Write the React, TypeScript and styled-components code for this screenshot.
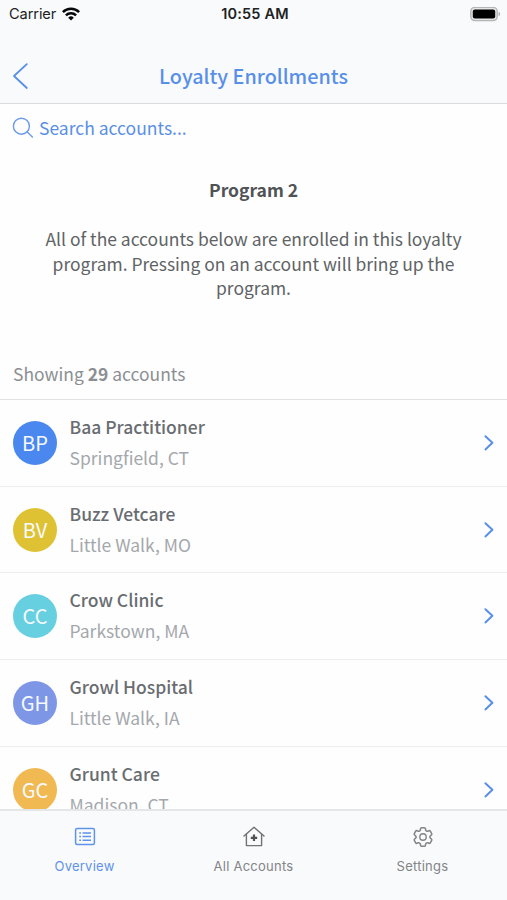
import React from "react";
import styled, { createGlobalStyle } from "styled-components";

const Global = createGlobalStyle`
  * { box-sizing: border-box; }
  html, body { margin: 0; padding: 0; background: #fff; overflow: hidden; }
`;

const Screen = styled.div`
  width: 507px;
  height: 900px;
  display: flex;
  flex-direction: column;
  overflow: hidden;
  background: #fefefe;
  font-family: "Noto Sans CJK SC", "Noto Sans", sans-serif;
`;

const StatusBar = styled.div`
  height: 28px;
  flex: none;
  display: grid;
  grid-template-columns: 1fr auto 1fr;
  align-items: center;
  padding: 0 6px 0 9px;
  font: 400 15px/28px Inter, sans-serif;
  color: #222;
  background: #f9fafc;
`;

const Carrier = styled.div`
  display: flex;
  align-items: center;
  gap: 6px;
  font-size: 14.6px;
  letter-spacing: -0.1px;
`;

const Clock = styled.div`
  font-weight: 600;
  font-size: 14.5px;
  letter-spacing: 0.2px;
`;

const Battery = styled.div`
  display: flex;
  justify-content: flex-end;
`;

const Header = styled.header`
  height: 76px;
  flex: none;
  display: grid;
  grid-template-columns: 60px 1fr 60px;
  align-items: center;
  padding-top: 23px;
  padding-bottom: 3px;
  background: #f9fafc;
  border-bottom: 1px solid #d9dbdd;
`;

const BackButton = styled.div`
  display: flex;
  padding-left: 12px;
`;

const Title = styled.h1`
  margin: 0;
  text-align: center;
  color: #588fe8;
  font-size: 19.8px;
  line-height: 28px;
  font-weight: 500;
`;

const SearchBar = styled.div`
  height: 48px;
  flex: none;
  display: flex;
  align-items: center;
  gap: 5px;
  padding-left: 12px;
  color: #5a8fe6;
  font-size: 17.5px;
  line-height: 24px;
`;

const Intro = styled.section`
  height: 210px;
  flex: none;
  padding: 26px 40px 0;
  text-align: center;
  color: #606365;
`;

const ProgramName = styled.h2`
  margin: 0 0 25px;
  font-size: 17.5px;
  line-height: 24px;
  font-weight: 700;
  color: #505355;
`;

const Description = styled.p`
  margin: 0;
  font-size: 17.47px;
  line-height: 24.5px;
`;

const Count = styled.div`
  height: 38px;
  flex: none;
  padding-left: 13px;
  font-size: 17.45px;
  line-height: 24px;
  color: #8c8f92;
  border-bottom: 1px solid #dfe1e2;
`;

const List = styled.div`
  flex: 1;
  min-height: 0;
  overflow: hidden;
`;

const Row = styled.div`
  height: 86.7px;
  display: grid;
  grid-template-columns: 44px 1fr auto;
  column-gap: 12.5px;
  align-items: center;
  padding: 0 12px 0 13px;
  border-bottom: 1px solid #ebedee;
`;

const Avatar = styled.div<{ $color: string }>`
  width: 44px;
  height: 44px;
  border-radius: 50%;
  background: ${(p) => p.$color};
  color: #f6faff;
  font-size: 20px;
  line-height: 44px;
  text-align: center;
`;

const Details = styled.div`
  padding-bottom: 2px;
  font-size: 17.5px;
  line-height: 31px;
`;

const Name = styled.div`
  color: #696d71;
  font-weight: 500;
`;

const Place = styled.div`
  color: #a4a8ac;
`;

const TabBar = styled.nav`
  height: 91px;
  flex: none;
  display: grid;
  grid-template-columns: repeat(3, 1fr);
  background: #f9fafc;
  border-top: 2px solid #e4e6e7;
`;

const Tab = styled.div<{ $active?: boolean }>`
  display: flex;
  flex-direction: column;
  align-items: center;
  gap: 8px;
  padding-top: 15px;
  color: ${(p) => (p.$active ? "#5f93ea" : "#828486")};
  font: 400 13px/20px Inter, sans-serif;
  letter-spacing: 0.25px;
`;

const accounts = [
  { initials: "BP", color: "#4a87ef", name: "Baa Practitioner", place: "Springfield, CT" },
  { initials: "BV", color: "#dfc233", name: "Buzz Vetcare", place: "Little Walk, MO" },
  { initials: "CC", color: "#66cfe0", name: "Crow Clinic", place: "Parkstown, MA" },
  { initials: "GH", color: "#7d97e6", name: "Growl Hospital", place: "Little Walk, IA" },
  { initials: "GC", color: "#f1b952", name: "Grunt Care", place: "Madison, CT" },
];

const WifiIcon = () => (
  <svg width="18" height="14" viewBox="0 0 18 14" fill="none" stroke="#080808" strokeWidth="2.5">
    <path d="M.9 5.1a11.4 11.4 0 0 1 16.2 0" />
    <path d="M3.9 8.3a7.2 7.2 0 0 1 10.2 0" />
    <path d="M9 13.6 6.2 10.7a4 4 0 0 1 5.6 0Z" fill="#080808" stroke="none" />
  </svg>
);

const BatteryIcon = () => (
  <svg width="31" height="15" viewBox="0 0 31 15">
    <rect x=".8" y=".4" width="26.4" height="13.2" rx="4" fill="#e4e5e6" stroke="#b4b5b7" strokeWidth="1.4" />
    <rect x="2.8" y="2.4" width="22.4" height="9.2" rx="2" fill="#000" />
    <path d="M28.6 4.8c2 .8 2 3.6 0 4.4Z" fill="#a8a9ab" />
  </svg>
);

const BackIcon = () => (
  <svg width="18" height="28" viewBox="0 0 18 28" fill="none" stroke="#588fe8" strokeWidth="1.8" strokeLinecap="round" strokeLinejoin="round">
    <path d="M14.8 2.2 2 14l12.8 12" />
  </svg>
);

const SearchIcon = () => (
  <svg width="22" height="22" viewBox="0 0 22 22" fill="none" stroke="#6b9bea" strokeWidth="1.4" strokeLinecap="round">
    <circle cx="9.4" cy="9.2" r="8" />
    <path d="m15 14.8 5.4 5.2" />
  </svg>
);

const ChevronIcon = () => (
  <svg width="12" height="18" viewBox="0 0 12 18" fill="none" stroke="#588fe8" strokeWidth="2" strokeLinecap="round" strokeLinejoin="round">
    <path d="m2.4 2.2 7 6.600-7 6.600" />
  </svg>
);

const ListIcon = () => (
  <svg width="24" height="22" viewBox="0 0 24 22" fill="none" stroke="currentColor" strokeWidth="1.5">
    <rect x="2.6" y="2.4" width="18.800" height="16.200" rx="1.500" />
    <path d="M9.500 7h8.500M9.500 10.600h8.500M9.500 14.200h8.500M6.200 7h1.800M6.200 10.600h1.800M6.200 14.200h1.800" />
  </svg>
);

const HomeIcon = () => (
  <svg width="24" height="22" viewBox="0 0 24 22" fill="none" stroke="#707274" strokeWidth="1.4" strokeLinejoin="round" strokeLinecap="round">
    <path d="M2 10 12 1.300l10 8.700" />
    <path d="M4.400 8.200v11.400h15.200v-11.400" />
    <path d="M12 8.600v6.400M8.800 11.800h6.400" stroke="#505254" strokeWidth="2.200" strokeLinecap="butt" />
  </svg>
);

const GearIcon = () => (
  <svg width="24" height="22" viewBox="0 0 24 24" fill="none" stroke="currentColor" strokeWidth="1.5" strokeLinejoin="round">
    <path d="M9.600 3.940c.09-.54.56-.94 1.110-.94h2.580c.55 0 1.020.4 1.110.94l.21 1.280c.06.37.31.68.65.87l.22.13c.32.2.72.26 1.070.12l1.220-.45a1.130 1.130 0 0 1 1.370.49l1.300 2.250a1.130 1.130 0 0 1-.26 1.430l-1 .82c-.3.24-.44.61-.43.99v.26c-.01.38.13.75.43.99l1 .83c.43.35.54.95.26 1.430l-1.300 2.250a1.130 1.130 0 0 1-1.370.49l-1.220-.46c-.35-.13-.75-.07-1.070.13l-.22.13c-.34.18-.59.49-.65.86l-.21 1.290c-.09.54-.56.94-1.110.94h-2.600c-.55 0-1.010-.4-1.100-.94l-.22-1.290c-.06-.37-.3-.68-.64-.86l-.22-.13c-.32-.2-.72-.26-1.080-.13l-1.210.46a1.130 1.130 0 0 1-1.370-.49l-1.300-2.250a1.130 1.130 0 0 1 .26-1.430l1-.83c.3-.24.44-.61.43-.99v-.26c.01-.38-.13-.75-.43-.99l-1-.82a1.130 1.130 0 0 1-.26-1.430l1.300-2.250a1.130 1.130 0 0 1 1.370-.49l1.220.45c.35.14.75.08 1.070-.12l.22-.13c.34-.19.58-.5.64-.87Z" transform="translate(-1.440 -1.440) scale(1.120)" />
    <circle cx="12" cy="12" r="3.500" />
  </svg>
);

export default function App() {
  return (
    <Screen>
      <Global />
      <StatusBar>
        <Carrier>
          <span>Carrier</span>
          <WifiIcon />
        </Carrier>
        <Clock>10:55 AM</Clock>
        <Battery>
          <BatteryIcon />
        </Battery>
      </StatusBar>
      <Header>
        <BackButton>
          <BackIcon />
        </BackButton>
        <Title>Loyalty Enrollments</Title>
      </Header>
      <SearchBar>
        <SearchIcon />
        <span>Search accounts...</span>
      </SearchBar>
      <Intro>
        <ProgramName>Program 2</ProgramName>
        <Description>
          All of the accounts below are enrolled in this loyalty program. Pressing on an account will bring up the program.
        </Description>
      </Intro>
      <Count>
        Showing <b>29</b> accounts
      </Count>
      <List>
        {accounts.map((a) => (
          <Row key={a.name}>
            <Avatar $color={a.color}>{a.initials}</Avatar>
            <Details>
              <Name>{a.name}</Name>
              <Place>{a.place}</Place>
            </Details>
            <ChevronIcon />
          </Row>
        ))}
      </List>
      <TabBar>
        <Tab $active>
          <ListIcon />
          Overview
        </Tab>
        <Tab>
          <HomeIcon />
          All Accounts
        </Tab>
        <Tab>
          <GearIcon />
          Settings
        </Tab>
      </TabBar>
    </Screen>
  );
}
